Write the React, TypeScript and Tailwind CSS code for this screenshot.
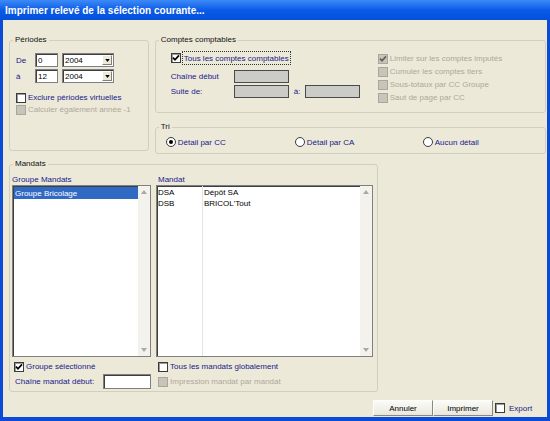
import type { ReactNode } from "react";

const font = { fontFamily: '"Liberation Sans", Arial, sans-serif' };

function CheckBox({ checked = false, disabled = false }: { checked?: boolean; disabled?: boolean }) {
  return (
    <span
      className={
        disabled
          ? "flex h-[10px] w-[10px] shrink-0 items-center justify-center border border-[#a9a79c] bg-[#c7c5ba]"
          : "flex h-[10px] w-[10px] shrink-0 items-center justify-center border border-[#3a3a3a] bg-white shadow-[inset_1px_1px_0_#9a9a9a]"
      }
    >
      {checked && (
        <svg viewBox="0 0 8 8" className="h-[8px] w-[8px]">
          <path d="M1 3.6 L3 5.8 L7 1.4" stroke={disabled ? "#5e5e5e" : "#000"} strokeWidth="1.7" fill="none" />
        </svg>
      )}
    </span>
  );
}

function Radio({ checked = false }: { checked?: boolean }) {
  return (
    <span className="flex h-[10px] w-[10px] shrink-0 items-center justify-center rounded-full border border-[#3a3a3a] bg-white">
      {checked && <span className="h-[4px] w-[4px] rounded-full bg-black" />}
    </span>
  );
}

function Arrow({ up = false }: { up?: boolean }) {
  return (
    <div className="flex h-[12px] items-center justify-center">
      <svg viewBox="0 0 6 4" className="h-[4px] w-[6px]">
        <path d={up ? "M0 4 L3 0 L6 4 Z" : "M0 0 L3 4 L6 0 Z"} fill="#a9a9a9" />
      </svg>
    </div>
  );
}

function VScroll() {
  return (
    <div className="flex w-[12px] shrink-0 flex-col justify-between bg-[#f3f2ec]">
      <Arrow up />
      <Arrow />
    </div>
  );
}

function Group({ title, className, children }: { title: string; className: string; children: ReactNode }) {
  return (
    <fieldset className={`rounded-[3px] border border-[#d0d0bf] ${className}`}>
      <legend className="ml-[3px] px-[2px] text-[8px] leading-[12px] text-[#111]">{title}</legend>
      {children}
    </fieldset>
  );
}

function Combo({ value }: { value: string }) {
  return (
    <div className="flex h-[14px] w-[52px] border border-[#7f7f7f] bg-white shadow-[inset_1px_1px_0_#3f3f3f]">
      <span className="flex-1 pl-[2px] pt-[1px] leading-[11px]">{value}</span>
      <span className="m-[1px] flex w-[10px] items-center justify-center border border-t-white border-l-white border-r-[#808080] border-b-[#808080] bg-[#ece9d8]">
        <svg viewBox="0 0 6 4" className="h-[3px] w-[5px]">
          <path d="M0 0 L3 4 L6 0 Z" fill="#000" />
        </svg>
      </span>
    </div>
  );
}

function Button({ label }: { label: string }) {
  return (
    <div className="flex h-[16px] w-[60px] items-center justify-center border border-t-[#fdfdfb] border-l-[#fdfdfb] border-r-[#8a887c] border-b-[#8a887c] bg-gradient-to-b from-[#fbfbf8] to-[#e9e7dd] text-black">
      {label}
    </div>
  );
}

export default function App() {
  return (
    <div className="flex h-[421px] w-[550px] flex-col bg-[#0b4bd8] text-[8px] leading-[11px]" style={font}>
      {/* Title bar */}
      <div className="flex h-[20px] shrink-0 items-center bg-gradient-to-b from-[#3d8af7] via-[#0a5be8] to-[#0450da] pl-[5px] text-[10px] font-bold text-white">
        Imprimer relevé de la sélection courante...
      </div>

      <div className="mx-[3px] mb-[4px] flex flex-1 flex-col bg-[#ece9d8] pl-[6px] pr-[1px] pt-[14px]">
        <div className="flex gap-[6px]">
          {/* Périodes */}
          <Group title="Périodes" className="h-[117px] w-[140px]">
            <div className="flex flex-col pl-[6px] text-[#20208a]">
              <div className="mt-[7px] flex h-[14px] items-center">
                <span className="w-[19px]">De</span>
                <span className="h-[14px] w-[23px] border border-[#7f7f7f] bg-white pl-[2px] pt-[1px] text-black shadow-[inset_1px_1px_0_#3f3f3f]">0</span>
                <span className="ml-[4px] text-black">
                  <Combo value="2004" />
                </span>
              </div>
              <div className="mt-[2px] flex h-[14px] items-center">
                <span className="w-[19px]">à</span>
                <span className="h-[14px] w-[23px] border border-[#7f7f7f] bg-white pl-[2px] pt-[1px] text-black shadow-[inset_1px_1px_0_#3f3f3f]">12</span>
                <span className="ml-[4px] text-black">
                  <Combo value="2004" />
                </span>
              </div>
              <div className="mt-[9px] flex h-[11px] items-center gap-[2px]">
                <CheckBox />
                <span>Exclure périodes virtuelles</span>
              </div>
              <div className="mt-[1px] flex h-[11px] items-center gap-[2px]">
                <CheckBox disabled />
                <span className="text-[#aca899]">Calculer également année -1</span>
              </div>
            </div>
          </Group>

          <div className="flex w-[392px] flex-col">
            {/* Comptes comptables */}
            <Group title="Comptes comptables" className="h-[79px] w-full">
              <div className="flex pl-[15px] text-[#20208a]">
                <div className="flex w-[207px] flex-col">
                  <div className="mt-[5px] flex h-[14px] items-center">
                    <CheckBox checked />
                    <span className="ml-[1px] flex h-[14px] items-center border border-dotted border-[#333] px-[1px]">
                      Tous les comptes comptables
                    </span>
                  </div>
                  <div className="mt-[5px] flex h-[13px] items-center">
                    <span className="w-[63px]">Chaîne début</span>
                    <span className="h-[13px] w-[55px] border border-[#4a4a4a] bg-[#cbcbc8]" />
                  </div>
                  <div className="mt-[2px] flex h-[13px] items-center">
                    <span className="w-[63px]">Suite de:</span>
                    <span className="h-[13px] w-[55px] border border-[#4a4a4a] bg-[#cbcbc8]" />
                    <span className="ml-[5px] w-[11px]">à:</span>
                    <span className="h-[13px] w-[55px] border border-[#4a4a4a] bg-[#cbcbc8]" />
                  </div>
                </div>
                <div className="mt-[6px] flex flex-col text-[#aca899]">
                  {[
                    ["Limiter sur les comptes imputés", true],
                    ["Cumuler les comptes tiers", false],
                    ["Sous-totaux par CC Groupe", false],
                    ["Saut de page par CC", false],
                  ].map(([label, checked]) => (
                    <div key={label as string} className="flex h-[13px] items-center gap-[2px]">
                      <CheckBox disabled checked={checked as boolean} />
                      <span>{label}</span>
                    </div>
                  ))}
                </div>
              </div>
            </Group>

            {/* Tri */}
            <Group title="Tri" className="mt-[8px] h-[33px] w-full">
              <div className="mt-[3px] flex h-[12px] items-center pl-[10px] text-[#20208a]">
                <div className="flex w-[129px] items-center gap-[2px]">
                  <Radio checked />
                  <span>Détail par CC</span>
                </div>
                <div className="flex w-[128px] items-center gap-[2px]">
                  <Radio />
                  <span>Détail par CA</span>
                </div>
                <div className="flex items-center gap-[2px]">
                  <Radio />
                  <span>Aucun détail</span>
                </div>
              </div>
            </Group>
          </div>
        </div>

        {/* Mandats */}
        <Group title="Mandats" className="mt-[4px] h-[234px] w-[369px]">
          <div className="flex pl-[2px]">
            <div className="flex w-[139px] flex-col">
              <div className="mt-[3px] flex h-[12px] items-center text-[#20208a]">Groupe Mandats</div>
              <div className="flex h-[172px] border border-[#7f7f7f] bg-white shadow-[inset_1px_1px_0_#3f3f3f]">
                <div className="flex-1 pl-[1px] pt-[1px]">
                  <div className="flex h-[12px] items-center bg-[#316ac5] pl-[1px] text-white">Groupe Bricolage</div>
                </div>
                <VScroll />
              </div>
              <div className="mt-[4px] flex h-[11px] items-center gap-[2px] pl-[2px] text-[#20208a]">
                <CheckBox checked />
                <span>Groupe sélectionné</span>
              </div>
              <div className="mt-[2px] flex h-[15px] items-center pl-[3px] text-[#20208a]">
                <span className="w-[89px]">Chaîne mandat début:</span>
                <span className="h-[15px] w-[48px] border border-[#7f7f7f] bg-white shadow-[inset_1px_1px_0_#3f3f3f]" />
              </div>
            </div>

            <div className="ml-[5px] flex w-[217px] flex-col">
              <div className="mt-[3px] flex h-[12px] items-center pl-[2px] text-[#20208a]">Mandat</div>
              <div className="flex h-[172px] border border-[#7f7f7f] bg-white shadow-[inset_1px_1px_0_#3f3f3f]">
                <div className="flex flex-1 text-black">
                  <div className="flex w-[46px] flex-col border-r border-[#e6e4dc] pl-[1px] pt-[1px]">
                    <span className="h-[11px]">DSA</span>
                    <span className="h-[11px]">DSB</span>
                  </div>
                  <div className="flex flex-col pl-[1px] pt-[1px]">
                    <span className="h-[11px]">Dépôt SA</span>
                    <span className="h-[11px]">BRICOL'Tout</span>
                  </div>
                </div>
                <VScroll />
              </div>
              <div className="mt-[4px] flex h-[11px] items-center gap-[2px] pl-[2px] text-[#20208a]">
                <CheckBox />
                <span>Tous les mandats globalement</span>
              </div>
              <div className="mt-[2px] flex h-[15px] items-center gap-[2px] pl-[2px] text-[#aca899]">
                <CheckBox disabled />
                <span>Impression mandat par mandat</span>
              </div>
            </div>
          </div>
        </Group>

        {/* Buttons */}
        <div className="ml-[364px] mt-[8px] flex items-center">
          <Button label="Annuler" />
          <Button label="Imprimer" />
          <span className="ml-[2px] flex items-center gap-[4px] text-[#20208a]">
            <CheckBox />
            Export
          </span>
        </div>
      </div>
    </div>
  );
}
